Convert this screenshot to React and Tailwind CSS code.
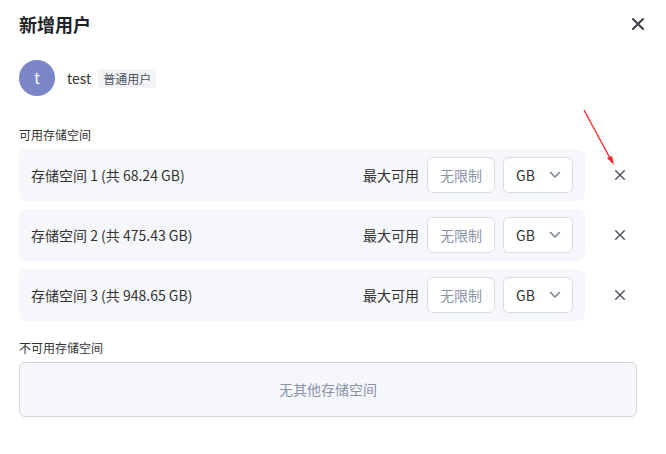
import React from 'react';

const font = { fontFamily: '"Noto Sans CJK SC", "Noto Sans", sans-serif' };

const XIcon = ({ size = 14, stroke = 2, className = '' }) => (
  <svg width={size} height={size} viewBox="0 0 14 14" className={className}>
    <path d="M2 2 L12 12 M12 2 L2 12" stroke="currentColor" strokeWidth={stroke} strokeLinecap="round" fill="none" />
  </svg>
);

const Chevron = () => (
  <svg width="12" height="8" viewBox="0 0 12 8" className="text-[#7c859b]">
    <path d="M1.5 1.5 L6 6 L10.5 1.5" stroke="currentColor" strokeWidth="1.6" fill="none" strokeLinecap="round" strokeLinejoin="round" />
  </svg>
);

const storages = [
  { id: 1, total: '68.24' },
  { id: 2, total: '475.43' },
  { id: 3, total: '948.65' },
];

export default function App() {
  return (
    <div className="relative w-[666px] h-[454px] bg-white text-[#1f2329]" style={font}>
      <div className="flex items-center justify-between pl-[19px] pr-[21px] pt-[8px] h-[40px]">
        <h2 className="text-[18px] font-bold text-[#1f2329]">新增用户</h2>
        <XIcon size={14} stroke={2} className="text-[#3a3f4b]" />
      </div>

      <div className="flex items-center mt-[20px] pl-[19px] h-[36px]">
        <div className="w-[36px] h-[36px] rounded-full bg-[#7a86c8] flex items-center justify-center text-white text-[15px]">t</div>
        <span className="ml-[12px] text-[14px] text-[#333]">test</span>
        <span className="ml-[7px] px-[5px] h-[19px] leading-[19px] rounded-[4px] bg-[#f2f4f7] text-[12px] text-[#4a5060]">普通用户</span>
      </div>

      <div className="pl-[19px] pt-[31px] text-[12px] leading-[16px] text-[#333]">可用存储空间</div>

      <div className="flex flex-col gap-[8px] pl-[19px] mt-[6px]">
        {storages.map((s) => (
          <div key={s.id} className="flex items-center">
            <div className="w-[566px] h-[52px] rounded-[7px] bg-[#f6f7fb] flex items-center pl-[12px] pr-[12px]">
              <span className="text-[14px] text-[#333] flex-1">存储空间 {s.id} (共 {s.total} GB)</span>
              <span className="text-[14px] text-[#333] mr-[8px]">最大可用</span>
              <div className="w-[68px] h-[36px] rounded-[6px] border border-[#d9dde6] bg-white flex items-center justify-center text-[14px] text-[#8a93a8]">无限制</div>
              <div className="ml-[8px] w-[70px] h-[36px] rounded-[6px] border border-[#d9dde6] bg-white flex items-center justify-between pl-[12px] pr-[11px] text-[14px] text-[#333]">
                <span>GB</span>
                <Chevron />
              </div>
            </div>
            <div className="ml-[29px] text-[#4a4f5c]">
              <XIcon size={12} stroke={1.6} />
            </div>
          </div>
        ))}
      </div>

      <div className="pl-[19px] pt-[19px] text-[12px] leading-[16px] text-[#333]">不可用存储空间</div>
      <div className="mx-[19px] mt-[6px] w-[618px] h-[55px] rounded-[6px] border border-[#d1d5de] bg-[#f6f7fb] flex items-center justify-center text-[14px] text-[#8a93a8]">
        无其他存储空间
      </div>

      <svg className="absolute left-0 top-0 pointer-events-none" width="666" height="454">
        <line x1="584" y1="110" x2="611" y2="160" stroke="#ff2020" strokeWidth="1.3" />
        <polygon points="614,165 607,158 612,156" fill="#ff2020" />
      </svg>
    </div>
  );
}
